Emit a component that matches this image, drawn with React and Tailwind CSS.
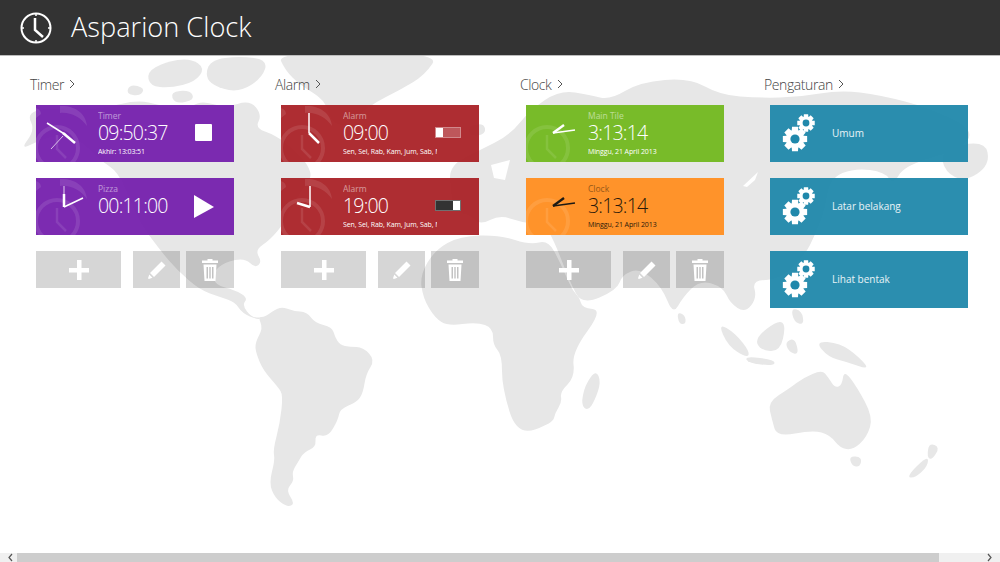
const FONT = "font-['Open_Sans','Noto_Sans',sans-serif]";

const LAND = [
  // north america
  "M27 114 45 108 75 110 105 108 137 100 160 105 185 112 200 100 225 108 250 100 262 115 255 128 275 135 295 150 308 165 312 178 300 192 285 222 270 240 255 250 262 262 255 268 245 258 225 262 213 272 215 285 235 290 248 298 242 305 252 318 263 317 258 320 242 313 235 302 220 297 200 290 177 270 160 250 140 223 130 200 118 172 100 160 80 140 60 135 40 140 20 150 35 130Z",
  // arctic islands
  "M147 72 165 62 190 58 205 68 195 82 170 88 150 86Z",
  "M210 60 240 56 268 60 262 78 240 92 218 88 205 78Z",
  "M170 92 190 90 195 100 175 104Z",
  "M130 84 145 88 140 96 126 94Z",
  // greenland
  "M277 52 440 52 425 75 400 90 370 105 345 128 330 120 325 100 300 85 285 70Z",
  // south america
  "M265 317 280 306 293 311 307 312 315 323 332 327 335 337 340 345 350 347 363 347 375 360 366 374 363 393 357 402 340 409 338 420 328 437 315 434 316 447 304 452 298 462 292 472 294 481 286 490 295 504 287 507 275 498 269 483 275 460 273 450 280 423 283 395 278 387 263 370 256 353 255 343 263 328 258 317Z",
  // africa
  "M423 298 420 275 435 250 460 236 500 235 530 245 548 240 560 262 572 290 580 298 582 308 603 310 572 352 575 377 560 392 562 402 555 413 553 423 517 436 502 387 502 355 493 345 493 328 477 322 448 326 435 318Z",
  // madagascar
  "M585 385 596 370 601 382 595 400 588 411 581 405Z",
  // eurasia
  "M450 165 480 150 510 135 530 110 560 90 590 95 610 100 640 82 690 78 720 95 760 98 800 97 840 90 880 95 930 108 975 130 960 150 905 165 893 185 885 172 855 168 830 178 825 210 815 235 805 255 780 280 752 280 757 298 745 313 730 303 723 287 700 280 683 297 673 315 662 287 640 268 622 275 617 290 582 305 570 282 555 243 545 225 520 222 500 215 480 225 470 215 455 212 450 190Z",
  // kamchatka side
  "M940 150 985 140 990 165 965 182 945 172Z",
  // uk and iceland
  "M468 126 484 123 486 134 470 137Z",
  // sumatra, java, borneo, sulawesi
  "M718 323 735 333 750 352 747 358 728 346Z",
  "M745 356 775 360 774 366 748 363Z",
  "M755 338 778 320 786 325 780 352 760 350Z",
  "M785 342 795 338 799 355 789 352Z",
  // philippines
  "M791 308 802 311 804 325 794 322Z",
  // new guinea
  "M815 341 840 343 859 357 870 370 847 362 828 357Z",
  // sri lanka
  "M677 312 685 315 686 324 679 324Z",
  // australia
  "M768 402 790 388 803 378 822 370 828 377 835 388 842 385 844 370 857 387 873 417 867 437 853 450 840 448 830 435 813 430 777 437 772 420Z",
  // tasmania, new zealand
  "M849 456 862 457 860 467 852 466Z",
  "M906 477 928 455 928 466 915 478Z",
  "M929 443 940 447 932 460 927 457Z",
];

// round the coast lines off: curves through the midpoints of each polygon
const smooth = (d) => {
  const n = d.match(/-?\d+(\.\d+)?/g).map(Number);
  const pts = [];
  for (let i = 0; i < n.length; i += 2) pts.push([n[i], n[i + 1]]);
  const mid = (a, b) => `${(a[0] + b[0]) / 2} ${(a[1] + b[1]) / 2}`;
  let out = `M${mid(pts[pts.length - 1], pts[0])}`;
  pts.forEach((p, i) => {
    out += `Q${p[0]} ${p[1]} ${mid(p, pts[(i + 1) % pts.length])}`;
  });
  return out + "Z";
};

const Gear = ({ cx, cy, r, hole }) => {
  // 8 tooth gear, outline worked out from the radius
  const pts = [];
  for (let i = 0; i < 8; i++) {
    const a = (i * Math.PI) / 4;
    const w = 0.24;
    const root = r * 0.74;
    [[a - w * 1.5, root], [a - w, r], [a + w, r], [a + w * 1.5, root]].forEach(([t, d]) => {
      pts.push(`${(cx + d * Math.cos(t)).toFixed(2)} ${(cy + d * Math.sin(t)).toFixed(2)}`);
    });
  }
  return (
    <>
      <path d={`M${pts.join(" ")}Z`} fill="white" />
      <circle cx={cx} cy={cy} r={hole} fill="#2088ab" />
    </>
  );
};

const Watermark = ({ bells }) => (
  <svg width="80" height="57" className="absolute left-0 top-0" fill="none">
    <circle cx="21" cy="43" r="21" stroke="white" strokeOpacity="0.1" strokeWidth="4" />
    <path d="M21 30V44L30 53" stroke="white" strokeOpacity="0.1" strokeWidth="2.5" />
    {bells && (
      <>
        <path d="M24 1C38 0 50 8 51 21 44 12 35 7 24 8Z" fill="white" fillOpacity="0.1" />
        <path d="M0 3C3 4 5 6 5 9L0 13Z" fill="white" fillOpacity="0.1" />
      </>
    )}
  </svg>
);

const Hands = ({ kind }) => {
  if (kind === "timer1")
    return (
      <svg width="80" height="57" className="absolute left-0 top-0" fill="none" stroke="white">
        <path d="M11 18 30 30" strokeWidth="1.5" />
        <path d="M27 28 39 38" strokeWidth="2.5" />
        <path d="M27 31 15 44" strokeWidth="0.7" />
      </svg>
    );
  if (kind === "timer2")
    return (
      <svg width="80" height="57" className="absolute left-0 top-0" fill="none" stroke="white">
        <path d="M28 8V16" strokeWidth="0.8" />
        <path d="M28 16V29" strokeWidth="2.5" />
        <path d="M28 29 47 20" strokeWidth="1.5" />
      </svg>
    );
  if (kind === "alarm1")
    return (
      <svg width="80" height="57" className="absolute left-0 top-0" fill="none" stroke="white">
        <path d="M28 8V28" strokeWidth="1.5" />
        <path d="M28 28 38 38" strokeWidth="2.5" />
      </svg>
    );
  if (kind === "alarm2")
    return (
      <svg width="80" height="57" className="absolute left-0 top-0" fill="none" stroke="white">
        <path d="M29 8V29" strokeWidth="1.5" />
        <path d="M29 29 16 25" strokeWidth="2.5" />
      </svg>
    );
  const c = kind === "clockDark" ? "#1d1a14" : "white";
  return (
    <svg width="80" height="57" className="absolute left-0 top-0" fill="none" stroke={c}>
      <path d="M27 28 49 25" strokeWidth="1.6" />
      <path d="M27 28 38 20" strokeWidth="2.4" />
    </svg>
  );
};

const Toggle = ({ on }) => (
  <div
    className={`absolute left-[154px] top-[22px] h-[11px] w-[26px] flex border border-white/30 ${
      on ? "justify-end bg-[#333333]" : "justify-start bg-white/20"
    }`}
  >
    <div className="w-[7px] bg-white" />
  </div>
);

const Card = ({ bg, hands, small, time, sub, dark, bells = true, children }) => (
  <div className={`relative h-[57px] w-[198px] overflow-hidden ${bg}`}>
    <Watermark bells={bells} />
    <Hands kind={hands} />
    <div className={`absolute left-[62px] top-[5px] flex flex-col ${dark ? "text-[#2a1a0a]" : "text-white"}`}>
      <span className="text-[8.5px] leading-[11px] opacity-50">{small}</span>
      <span className="text-[19.5px] leading-[23px] font-light tracking-[-0.8px]">{time}</span>
      {sub && (
        <span className="mt-[2px] h-[11px] w-[94px] overflow-hidden whitespace-nowrap text-[7px] leading-[11px] font-medium tracking-[-0.1px]">
          {sub}
        </span>
      )}
    </div>
    {children}
  </div>
);

const SettingCard = ({ label }) => (
  <div className="relative flex h-[57px] w-[198px] items-center bg-[#2088ab]/95 pl-[62px] text-[10px] text-white/90">
    <svg width="60" height="57" className="absolute left-0 top-0">
      <Gear cx={36} cy={18} r={9} hole={3.4} />
      <Gear cx={25} cy={34} r={12.5} hole={4.6} />
    </svg>
    {label}
  </div>
);

const Actions = () => (
  <div className="flex h-[37px] w-[198px]">
    <div className="flex h-full w-[85px] items-center justify-center bg-black/[0.16]">
      <svg width="20" height="20" fill="white">
        <path d="M8 0h4.5v8H20v4.500h-7.500V20H8v-7.500H0V8h8Z" />
      </svg>
    </div>
    <div className="ml-[12px] flex h-full w-[47px] items-center justify-center bg-black/[0.16]">
      <svg width="20" height="20" fill="white">
        <path d="M14.500 1.500 18.500 5.500 7 17 3 13ZM2.300 14.500 5.500 17.700 1.800 18.900 1 18.200Z" />
      </svg>
    </div>
    <div className="ml-[6px] flex h-full w-[48px] items-center justify-center bg-black/[0.16]">
      <svg width="18" height="24" fill="white">
        <path d="M6.500 1h5v1.500H17V5H1V2.500h5.500ZM2.500 6.500h13l-1 16.500h-11ZM5.500 9v11.500H7V9ZM8.300 9v11.500h1.400V9ZM11 9v11.500h1.500V9Z" fillRule="evenodd" />
      </svg>
    </div>
  </div>
);

const Column = ({ title, width, children }) => (
  <div className={`flex flex-col ${width}`}>
    <h2 className="flex h-[20px] items-center gap-[5px] text-[14px] font-light tracking-[-0.4px] text-[#444444]">
      {title}
      <svg width="6" height="10" fill="none" stroke="#555555" strokeWidth="1">
        <path d="M1 1 5 5 1 9" />
      </svg>
    </h2>
    <div className="mt-[11px] ml-[6px] flex flex-col gap-[16px]">{children}</div>
  </div>
);

export default function App() {
  return (
    <div className={`relative flex h-[562px] w-[1000px] flex-col overflow-hidden bg-white ${FONT}`}>
      {/* world map behind everything */}
      <svg width="1000" height="562" className="absolute left-0 top-0" fill="#e7e7e7">
        {LAND.map((d, i) => (
          <path key={i} d={smooth(d)} />
        ))}
        <path d="M743 186 758 172 755 180 747 187Z" fill="white" />
        <path d="M491 165 510 160 505 180 494 178Z" fill="white" />
      </svg>

      <header className="relative flex h-[56px] shrink-0 items-center border-b border-[#bdbdbd] bg-[#333333] pl-[20px]">
        <svg width="32" height="32" viewBox="0 0 32 32" fill="none" stroke="white">
          <circle cx="16" cy="16" r="14.500" strokeWidth="2" />
          <path d="M16 1v3M16 28v3M1 16h3M28 16h3" strokeWidth="1.500" />
          <path d="M15 6V18L23 25" strokeWidth="2.500" />
        </svg>
        <h1 className="ml-[19px] text-[27.2px] font-light text-white">Asparion Clock</h1>
      </header>

      <main className="relative flex flex-1 pl-[30px] pt-[18px]">
        <Column title="Timer" width="w-[245px]">
          <Card bg="bg-[#7520ad]/95" hands="timer1" small="Timer" time="09:50:37" sub="Akhir: 13:03:51">
            <div className="absolute left-[159px] top-[19px] h-[17px] w-[17px] rounded-[1px] bg-white" />
          </Card>
          <Card bg="bg-[#7520ad]/95" hands="timer2" small="Pizza" time="00:11:00">
            <svg width="22" height="24" fill="white" className="absolute left-[158px] top-[17px]">
              <path d="M0 0 20 12 0 23Z" />
            </svg>
          </Card>
          <Actions />
        </Column>
        <Column title="Alarm" width="w-[245px]">
          <Card bg="bg-[#aa2227]/95" hands="alarm1" small="Alarm" time="09:00" sub="Sen, Sel, Rab, Kam, Jum, Sab, Min">
            <Toggle />
          </Card>
          <Card bg="bg-[#aa2227]/95" hands="alarm2" small="Alarm" time="19:00" sub="Sen, Sel, Rab, Kam, Jum, Sab, Min">
            <Toggle on />
          </Card>
          <Actions />
        </Column>
        <Column title="Clock" width="w-[244px]">
          <Card bg="bg-[#78bb29]" hands="clockLight" bells={false} small="Main Tile" time="3:13:14" sub="Minggu, 21 April 2013" />
          <Card bg="bg-[#ff932a]" hands="clockDark" bells={false} small="Clock" time="3:13:14" sub="Minggu, 21 April 2013" dark />
          <Actions />
        </Column>
        <Column title="Pengaturan" width="w-[230px]">
          <SettingCard label="Umum" />
          <SettingCard label="Latar belakang" />
          <SettingCard label="Lihat bentak" />
        </Column>
      </main>

      {/* scroll bar */}
      <div className="relative flex h-[9px] shrink-0 items-center bg-[#f0f0f0]">
        <svg width="17" height="9" fill="none" stroke="#555555" strokeWidth="1.200" className="shrink-0">
          <path d="M12 1 9 4.500 12 8" />
        </svg>
        <div className="h-full w-[922px] bg-[#cdcdcd]" />
        <div className="flex-1" />
        <svg width="17" height="9" fill="none" stroke="#555555" strokeWidth="1.200" className="shrink-0">
          <path d="M5 1 8 4.500 5 8" />
        </svg>
      </div>
    </div>
  );
}
